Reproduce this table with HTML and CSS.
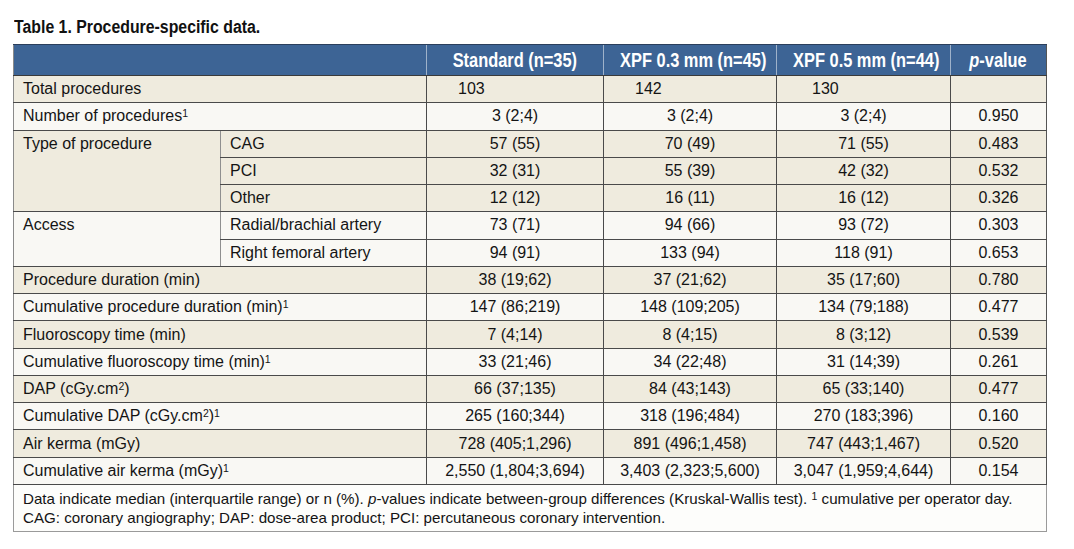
FILE: index.html
```html
<!DOCTYPE html>
<html lang="en">
<head>
<meta charset="utf-8">
<title>Table 1. Procedure-specific data.</title>
<link rel="stylesheet" href="styles.css">
</head>
<body>
<div class="wrap">
  <h1 class="title"><span class="cond">Table 1. Procedure-specific data.</span></h1>
  <table class="data">
    <colgroup>
      <col class="c-label"><col class="c-sub"><col class="c-std"><col class="c-x3"><col class="c-x5"><col class="c-p">
    </colgroup>
    <thead>
      <tr class="head">
        <th colspan="2"></th>
        <th><span class="cond">Standard (n=35)</span></th>
        <th><span class="cond">XPF 0.3 mm (n=45)</span></th>
        <th><span class="cond">XPF 0.5 mm (n=44)</span></th>
        <th><span class="cond"><i>p</i>-value</span></th>
      </tr>
    </thead>
    <tbody>
      <tr class="beige">
        <td class="label" colspan="2">Total procedures</td>
        <td class="num left">103</td><td class="num left">142</td><td class="num left l2">130</td><td class="num"></td>
      </tr>
      <tr class="light">
        <td class="label" colspan="2">Number of procedures<sup class="fn">1</sup></td>
        <td class="num">3 (2;4)</td><td class="num">3 (2;4)</td><td class="num">3 (2;4)</td><td class="num">0.950</td>
      </tr>
      <tr class="beige">
        <td class="label grp" rowspan="3">Type of procedure</td>
        <td class="sub">CAG</td>
        <td class="num">57 (55)</td><td class="num">70 (49)</td><td class="num">71 (55)</td><td class="num">0.483</td>
      </tr>
      <tr class="beige">
        <td class="sub">PCI</td>
        <td class="num">32 (31)</td><td class="num">55 (39)</td><td class="num">42 (32)</td><td class="num">0.532</td>
      </tr>
      <tr class="beige">
        <td class="sub">Other</td>
        <td class="num">12 (12)</td><td class="num">16 (11)</td><td class="num">16 (12)</td><td class="num">0.326</td>
      </tr>
      <tr class="light">
        <td class="label grp" rowspan="2">Access</td>
        <td class="sub">Radial/brachial artery</td>
        <td class="num">73 (71)</td><td class="num">94 (66)</td><td class="num">93 (72)</td><td class="num">0.303</td>
      </tr>
      <tr class="light">
        <td class="sub">Right femoral artery</td>
        <td class="num">94 (91)</td><td class="num">133 (94)</td><td class="num">118 (91)</td><td class="num">0.653</td>
      </tr>
      <tr class="beige">
        <td class="label" colspan="2">Procedure duration (min)</td>
        <td class="num">38 (19;62)</td><td class="num">37 (21;62)</td><td class="num">35 (17;60)</td><td class="num">0.780</td>
      </tr>
      <tr class="light">
        <td class="label" colspan="2">Cumulative procedure duration (min)<sup class="fn">1</sup></td>
        <td class="num">147 (86;219)</td><td class="num">148 (109;205)</td><td class="num">134 (79;188)</td><td class="num">0.477</td>
      </tr>
      <tr class="beige">
        <td class="label" colspan="2">Fluoroscopy time (min)</td>
        <td class="num">7 (4;14)</td><td class="num">8 (4;15)</td><td class="num">8 (3;12)</td><td class="num">0.539</td>
      </tr>
      <tr class="light">
        <td class="label" colspan="2">Cumulative fluoroscopy time (min)<sup class="fn">1</sup></td>
        <td class="num">33 (21;46)</td><td class="num">34 (22;48)</td><td class="num">31 (14;39)</td><td class="num">0.261</td>
      </tr>
      <tr class="beige">
        <td class="label" colspan="2">DAP (cGy.cm<sup class="fn">2</sup>)</td>
        <td class="num">66 (37;135)</td><td class="num">84 (43;143)</td><td class="num">65 (33;140)</td><td class="num">0.477</td>
      </tr>
      <tr class="light">
        <td class="label" colspan="2">Cumulative DAP (cGy.cm<sup class="fn">2</sup>)<sup class="fn">1</sup></td>
        <td class="num">265 (160;344)</td><td class="num">318 (196;484)</td><td class="num">270 (183;396)</td><td class="num">0.160</td>
      </tr>
      <tr class="beige">
        <td class="label" colspan="2">Air kerma (mGy)</td>
        <td class="num">728 (405;1,296)</td><td class="num">891 (496;1,458)</td><td class="num">747 (443;1,467)</td><td class="num">0.520</td>
      </tr>
      <tr class="light">
        <td class="label" colspan="2">Cumulative air kerma (mGy)<sup class="fn">1</sup></td>
        <td class="num">2,550 (1,804;3,694)</td><td class="num">3,403 (2,323;5,600)</td><td class="num">3,047 (1,959;4,644)</td><td class="num">0.154</td>
      </tr>
    </tbody>
    <tfoot>
      <tr class="foot">
        <td colspan="6">Data indicate median (interquartile range) or n (%). <i>p</i>-values indicate between-group differences (Kruskal-Wallis test). <sup class="fn">1</sup> cumulative per operator day.<br>CAG: coronary angiography; DAP: dose-area product; PCI: percutaneous coronary intervention.</td>
      </tr>
    </tfoot>
  </table>
</div>
</body>
</html>
```

FILE: styles.css
```css
html, body {
  margin: 0;
  padding: 0;
  background: #ffffff;
}

.wrap {
  padding: 17px 0 0 13px;
}

.title {
  margin: 0 0 6px 1px;
  font-family: "Liberation Sans", Arial, sans-serif;
  font-weight: bold;
  font-size: 18px;
  line-height: 21px;
  color: #111111;
  white-space: nowrap;
}

.title .cond {
  display: inline-block;
  transform: scaleX(0.88);
  transform-origin: left center;
}

.data {
  border-collapse: collapse;
  table-layout: fixed;
  width: 1034px;
  font-family: "Liberation Sans", Arial, sans-serif;
  font-size: 16px;
  color: #141414;
  border-left: 1px solid #8a8a8a;
  border-right: 1px solid #555555;
}

.c-label { width: 207px; }
.c-sub { width: 206px; }
.c-std { width: 177px; }
.c-x3 { width: 173px; }
.c-x5 { width: 174px; }
.c-p { width: 96px; }

.head {
  height: 31px;
  background: #3d6495;
}

.head th {
  font-family: "Liberation Sans", Arial, sans-serif;
  font-weight: bold;
  font-size: 20px;
  line-height: 24px;
  color: #ffffff;
  text-align: center;
  padding: 0;
  white-space: nowrap;
  border-top: 1px solid #2b3f5c;
  border-bottom: 1px solid #3a3a3a;
  border-left: 1px solid #9fb2ca;
}

.head th .cond {
  display: inline-block;
  transform: scaleX(0.82);
  transform-origin: center center;
}

.head th:first-child {
  border-left: 1px solid #8a8a8a;
}

tbody tr {
  height: 27.27px;
}

tbody td {
  padding: 0 9px;
  border-top: 1px solid #4a4a4a;
  border-bottom: 1px solid #4a4a4a;
  border-left: 1px solid #4a4a4a;
  vertical-align: middle;
  white-space: nowrap;
  line-height: 18px;
}

tbody td.label {
  border-left: 1px solid #8a8a8a;
}

tbody td.grp {
  vertical-align: top;
  padding-top: 4px;
}

tbody td.sub {
  border-left: 1px solid #8f8f8f;
}

.beige td { background: #efebde; }
.light td { background: #f9f8f4; }

.fn {
  font-size: 10.5px;
  line-height: 0;
  vertical-align: 4px;
}

.num {
  text-align: center;
}

.num.left {
  text-align: left;
  padding-left: 31px;
}

.num.left.l2 {
  padding-left: 35px;
}

.foot td {
  height: 46px;
  padding: 0 9px;
  background: #fdfdfb;
  border: 1px solid #9a9a9a;
  border-top: 1px solid #4a4a4a;
  font-size: 15.15px;
  line-height: 19px;
  vertical-align: middle;
  color: #141414;
}
```
